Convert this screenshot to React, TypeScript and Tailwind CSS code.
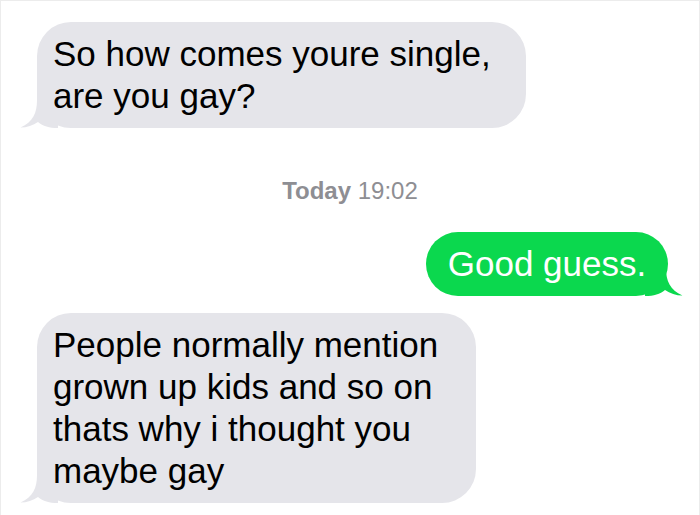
import React from 'react'

const font = { fontFamily: '"Liberation Sans", Arial, sans-serif' }

// bubble tail, drawn for the left side; mirrored for sent messages
const Tail: React.FC<{ side: 'left' | 'right'; color: string }> = ({ side, color }) => (
  <svg
    width="42"
    height="38"
    viewBox="0 0 42 38"
    className={
      side === 'left'
        ? 'absolute bottom-0 left-[-17px]'
        : 'absolute bottom-0 right-[-15px] scale-x-[-1]'
    }
  >
    <path
      d="M17 0 L17 10 C17 23 13 32 0.5 37.5 C7 37.5 13 35.5 18 32 C23 36 29 38 38 38 L38 0 Z"
      fill={color}
    />
  </svg>
)

interface BubbleProps {
  lines: string[]
  width: string
}

const Received: React.FC<BubbleProps> = ({ lines, width }) => (
  <div className={`relative ml-[36px] ${width} rounded-[34px] bg-[#e5e5ea] py-[11px] pl-[16px]`}>
    <Tail side="left" color="#e5e5ea" />
    <div className="relative text-[35px] leading-[42px] text-black whitespace-nowrap">
      {lines.map((l, i) => (
        <div key={i}>{l}</div>
      ))}
    </div>
  </div>
)

export default function App() {
  return (
    <div
      className="w-[700px] h-[515px] overflow-hidden bg-white border-l border-t border-r border-[#ececec]"
      style={font}
    >
      <div className="flex flex-col pt-[21px]">
        <Received width="w-[489px]" lines={['So how comes youre single,', 'are you gay?']} />

        {/* 时间戳 */}
        <div className="mt-[49px] h-[28px] text-center text-[24px] leading-[28px] text-[#8e8e93]">
          <span className="font-bold">Today</span> 19:02
        </div>

        <div className="relative mt-[27px] mr-[31px] self-end w-[242px] rounded-[32px] bg-[#0bd84e] py-[11px] flex justify-center">
          <Tail side="right" color="#0bd84e" />
          <span className="relative text-[35px] leading-[42px] text-white whitespace-nowrap">Good guess.</span>
        </div>

        <div className="mt-[17px]">
          <Received
            width="w-[439px]"
            lines={[
              'People normally mention',
              'grown up kids and so on',
              'thats why i thought you',
              'maybe gay',
            ]}
          />
        </div>
      </div>
    </div>
  )
}
